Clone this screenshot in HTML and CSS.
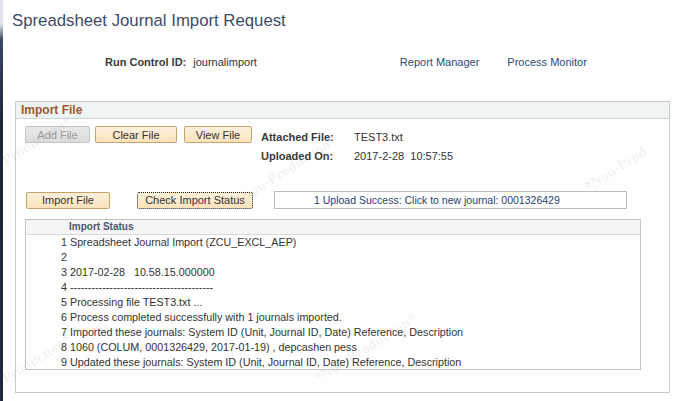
FILE: index.html
```html
<!DOCTYPE html>
<html>
<head>
<meta charset="utf-8">
<link rel="stylesheet" href="styles.css">
</head>
<body>
<div class="page">
  <div class="edge"></div>
  <div class="main">
    <h1 class="title">Spreadsheet Journal Import Request</h1>
    <div class="runrow">
      <span class="lbl">Run Control ID:</span>
      <span class="val">journalimport</span>
      <a class="link rm">Report Manager</a>
      <a class="link pm">Process Monitor</a>
    </div>
    <section class="box">
      <div class="box-head">Import File</div>
      <div class="box-body">
        <div class="row1">
          <div class="btns">
            <span class="btn disabled w-add">Add File</span>
            <span class="btn w-clear">Clear File</span>
            <span class="btn w-view">View File</span>
          </div>
          <div class="info">
            <span class="ilbl">Attached File:</span><span class="ival">TEST3.txt</span>
            <span class="ilbl">Uploaded On:</span><span class="ival">2017-2-28&nbsp;&nbsp;10:57:55</span>
          </div>
        </div>
        <div class="row2">
          <span class="btn w-import">Import File</span>
          <span class="btn focus w-check">Check Import Status</span>
          <span class="msg">1 Upload Success: Click to new journal: 0001326429</span>
        </div>
        <div class="grid">
          <div class="grid-head">Import Status</div>
          <div class="grid-rows">
            <div>1 Spreadsheet Journal Import (ZCU_EXCL_AEP)</div>
            <div>2</div>
            <div>3 2017-02-28&nbsp;&nbsp;&nbsp;10.58.15.000000</div>
            <div>4 ----------------------------------------</div>
            <div>5 Processing file TEST3.txt ...</div>
            <div>6 Process completed successfully with 1 journals imported.</div>
            <div>7 Imported these journals: System ID (Unit, Journal ID, Date) Reference, Description</div>
            <div>8 1060 (COLUM, 0001326429, 2017-01-19) , depcashen pess</div>
            <div>9 Updated these journals: System ID (Unit, Journal ID, Date) Reference, Description</div>
          </div>
        </div>
      </div>
    </section>
  </div>
  <span class="wm wm1">Production*</span>
  <span class="wm wm2">*Non-Production*</span>
  <span class="wm wm3">*Non-Prod</span>
  <span class="wm wm4">Production*</span>
  <span class="wm wm5">*Non-Production*</span>
</div>
</body>
</html>
```
FILE: styles.css
```css
html, body {
  margin: 0;
  padding: 0;
  background: #fff;
}
body {
  font-family: "Liberation Sans", Arial, sans-serif;
  font-size: 11px;
  color: #333;
  overflow: hidden;
}
.page {
  position: relative;
  display: flex;
  width: 690px;
  height: 401px;
  overflow: hidden;
}
.edge {
  width: 3px;
  flex: none;
  background: linear-gradient(#dfe2e6 0, #dfe2e6 24px, #3a4866 40px, #1d2538 120px, #20293d 100%);
}
.main {
  flex: 1;
  display: flex;
  flex-direction: column;
}
.title {
  margin: 10px 0 0 9px;
  font-size: 16.75px;
  font-weight: normal;
  line-height: 22px;
  color: #3e4b68;
}
.runrow {
  display: flex;
  align-items: center;
  margin-top: 23px;
  height: 14px;
  padding-left: 102px;
}
.lbl {
  font-weight: bold;
  color: #3a3a3a;
}
.val {
  margin-left: 7px;
}
.link {
  color: #2c4a78;
  text-decoration: none;
}
.rm {
  margin-left: 143px;
}
.pm {
  margin-left: 28px;
}
.box {
  margin: 32px 0 0 12px;
  width: 655px;
  height: 292px;
  box-sizing: border-box;
  border: 1px solid #c9cccc;
}
.box-head {
  height: 17px;
  line-height: 17px;
  box-sizing: border-box;
  padding-left: 5px;
  background: #eef4f3;
  border-bottom: 1px solid #cfd3d3;
  color: #a0582a;
  font-weight: bold;
  font-size: 12px;
}
.box-body {
  padding: 7px 0 0 9px;
}
.row1 {
  display: flex;
  align-items: flex-start;
}
.btns {
  display: flex;
  gap: 5px;
}
.btn {
  display: flex;
  align-items: center;
  justify-content: center;
  height: 17px;
  box-sizing: border-box;
  border: 1px solid #c9a26c;
  border-radius: 2px;
  background: linear-gradient(#fdf1dc, #fbe3bb);
  color: #333;
  font-size: 11px;
}
.btn.disabled {
  border-color: #c4c4c4;
  background: linear-gradient(#e9e9e9, #dcdcdc);
  color: #9a9a9a;
}
.btn.focus {
  border: 1px dotted #222;
}
.w-add { width: 65px; }
.w-clear { width: 82px; }
.w-view { width: 68px; margin-left: 2px; }
.w-import { width: 84px; }
.w-check { width: 116px; margin-left: 27px; }
.info {
  display: grid;
  grid-template-columns: 93px auto;
  row-gap: 5px;
  margin-left: 9px;
  margin-top: 4px;
  line-height: 14px;
}
.ilbl {
  font-weight: bold;
  color: #3a3a3a;
}
.row2 {
  display: flex;
  align-items: center;
  margin-top: 28px;
  padding-left: 1px;
}
.msg {
  margin-left: 21px;
  width: 353px;
  height: 18px;
  box-sizing: border-box;
  border: 1px solid #b9bcbe;
  padding-left: 39px;
  display: flex;
  align-items: center;
  color: #1f3f6e;
  font-size: 10.5px;
}
.grid {
  margin-top: 10px;
  width: 616px;
  height: 151px;
  box-sizing: border-box;
  border: 1px solid #c4c4c4;
}
.grid-head {
  height: 15px;
  line-height: 14px;
  box-sizing: border-box;
  padding-left: 43px;
  background: #f5f5f5;
  border-bottom: 1px solid #dadada;
  font-weight: bold;
  font-size: 10px;
  color: #4a5570;
}
.grid-rows {
  padding: 0 0 0 35px;
  line-height: 15px;
  font-size: 10.75px;
  color: #333;
}
.wm {
  position: absolute;
  pointer-events: none;
  color: rgba(120, 120, 135, 0.1);
  font-weight: bold;
  font-size: 15px;
  font-family: "Liberation Serif", serif;
  transform: rotate(-32deg);
  transform-origin: left bottom;
  white-space: nowrap;
}
.wm1 { left: 8px; top: 152px; }
.wm2 { left: 240px; top: 192px; }
.wm3 { left: 590px; top: 178px; }
.wm4 { left: 8px; top: 370px; }
.wm5 { left: 320px; top: 370px; }
```
